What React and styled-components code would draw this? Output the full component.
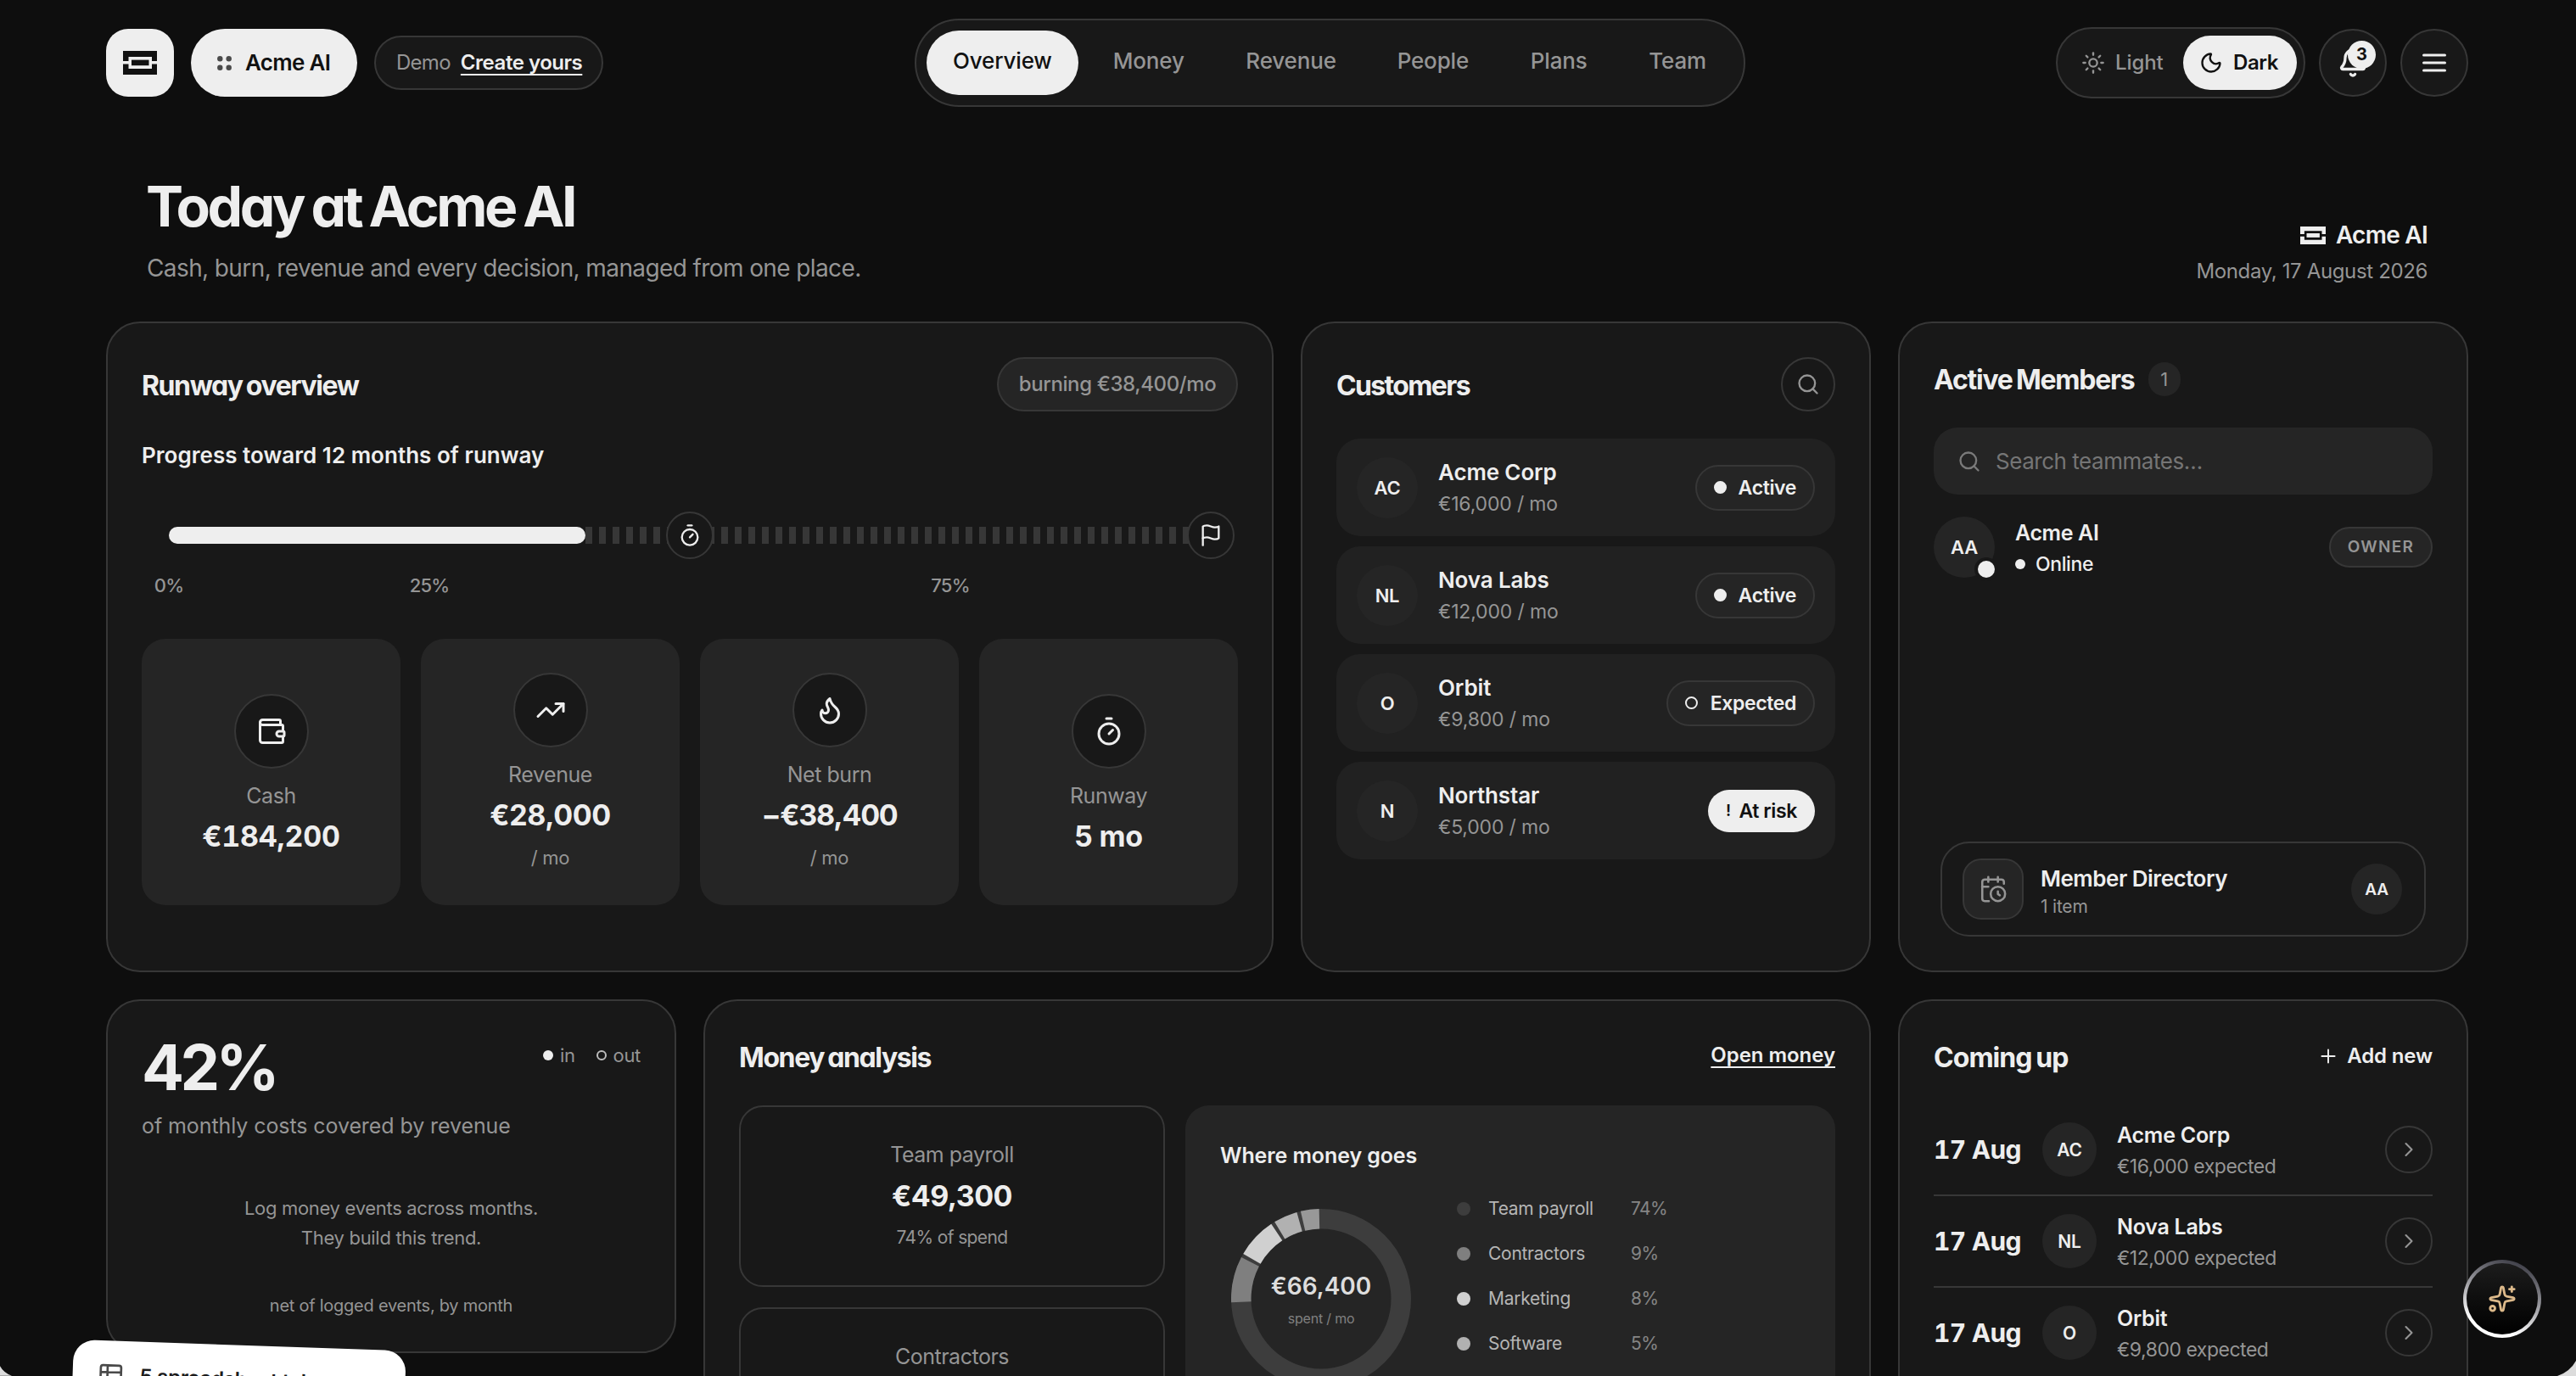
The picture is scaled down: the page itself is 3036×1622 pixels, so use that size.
import React from "react";
import styled, { createGlobalStyle, css } from "styled-components";
import {
  Sun, Moon, Bell, Search, Timer, Wallet, TrendingUp, Flame, CalendarClock,
  Plus, ChevronRight, Sparkles, Table2,
} from "lucide-react";

const c = {
  bg: "#0e0e0e", card: "#181818", tile: "#252525", row: "#212121", line: "#373737",
  text: "#eeeeee", muted: "#959595", ink: "#111111",
};

const Global = createGlobalStyle`
  * { box-sizing: border-box; }
  body { margin: 0; background: ${c.bg}; color: ${c.text}; font-family: Inter, "Liberation Sans", sans-serif; }
  h1, h2, h3, p { margin: 0; }
  svg { display: block; flex: none; }
`;

const Page = styled.div`
  position: relative; width: 3036px; height: 1622px; overflow: hidden;
  background: ${c.bg}; padding: 22px 127px 0 125px;
`;

/* Shared text */
const Txt = styled.span`
  display: block; white-space: nowrap;
  font-size: ${(p) => p.$s || 24}px;
  line-height: ${(p) => p.$lh || 32}px;
  font-weight: ${(p) => p.$w || 400};
  letter-spacing: ${(p) => p.$ls ?? -0.015}em;
  color: ${(p) => p.$c || c.text};
  ${(p) => p.$tnum && css`font-feature-settings: "tnum";`}
`;
const Heading = styled.h2`
  font-size: 32px; line-height: 40px; font-weight: 700; letter-spacing: ${(p) => p.$ls ?? -0.044}em;
  font-feature-settings: "cv11"; white-space: nowrap; padding-top: 3px; word-spacing: -0.06em;
`;

/* Header */
const Header = styled.header`display: flex; align-items: center; justify-content: space-between; height: 104px;`;
const Group = styled.div`display: flex; align-items: center; gap: ${(p) => p.$gap}px;`;
const LogoTile = styled.div`
  width: 80px; height: 80px; border-radius: 26px; background: ${c.text}; color: ${c.ink};
  display: grid; place-items: center;
`;
const Company = styled.button`
  width: 196px; height: 80px; border: 0; border-radius: 40px; background: ${c.text}; color: ${c.ink};
  display: flex; align-items: center; gap: 16px; padding: 0 0 0 31px; font-family: inherit;
`;
const DemoPill = styled.div`
  width: 270px; height: 64px; border: 2px solid ${c.line}; border-radius: 32px; background: ${c.card};
  display: flex; align-items: center; gap: 12px; padding-left: 24px;
`;
const Underlined = styled(Txt)`
  text-decoration: underline; text-decoration-thickness: 2px; text-underline-offset: 5px; text-decoration-skip-ink: none;
`;
const Nav = styled.nav`
  display: flex; gap: 8px; width: 979px; height: 104px; padding: 12px; border: 2px solid ${c.line};
  border-radius: 52px; background: ${c.card};
`;
const NavItem = styled.a`
  height: 76px; width: ${(p) => p.$width}px; border-radius: 38px; text-align: center; white-space: nowrap;
  font-size: 26px; line-height: 71px; font-weight: 500; letter-spacing: -0.006em;
  color: ${(p) => (p.$active ? c.ink : c.muted)};
  background: ${(p) => (p.$active ? c.text : "transparent")};
`;
const Toggle = styled.div`
  display: flex; width: 294px; height: 84px; padding: 8px; border: 2px solid ${c.line}; border-radius: 42px; background: ${c.card};
`;
const ToggleItem = styled.div`
  height: 64px; border-radius: 32px; display: flex; align-items: center; gap: 12px;
  width: ${(p) => (p.$on ? 134 : 140)}px; padding-left: ${(p) => (p.$on ? 19 : 20)}px;
  color: ${(p) => (p.$on ? c.ink : c.muted)}; background: ${(p) => (p.$on ? c.text : "transparent")};
`;
const RoundButton = styled.button`
  position: relative; width: ${(p) => p.$d}px; height: ${(p) => p.$d}px; padding: 0; border-radius: 50%;
  border: 2px solid ${c.line}; background: ${(p) => p.$bg || c.card}; color: ${(p) => p.$c || c.text};
  display: grid; place-items: center; flex: none;
`;
const Count = styled.span`
  position: absolute; top: 12px; right: 11px; width: 33px; height: 33px; border-radius: 50%;
  background: ${c.text}; color: ${c.ink}; font: 700 20px/33px Inter, sans-serif; text-align: center;
`;

/* Hero */
const Hero = styled.section`
  display: flex; justify-content: space-between; align-items: flex-end; height: 210px; padding: 0 48px; margin-bottom: 43px;
`;
const Title = styled.h1`
  font-size: 66px; line-height: 72px; font-weight: 700; letter-spacing: -0.052em; word-spacing: -0.045em;
  font-feature-settings: "cv11"; margin-bottom: 17px; margin-left: -1px; white-space: nowrap;
`;
const Today = styled.div`display: flex; flex-direction: column; align-items: flex-end; gap: 9px;`;

/* Grid and cards */
const Grid = styled.main`
  display: grid; grid-template-columns: repeat(4, 672px); grid-template-rows: 767px 767px; gap: 32px;
`;
const Card = styled.section`
  grid-column: span ${(p) => p.$span || 1}; height: ${(p) => p.$h || 767}px;
  border: 2px solid ${c.line}; border-radius: 40px; background: ${c.card}; padding: 40px;
  display: flex; flex-direction: column;
`;
const CardHead = styled.div`
  display: flex; align-items: center; justify-content: ${(p) => (p.$start ? "flex-start" : "space-between")};
  gap: 16px; height: ${(p) => p.$h || 64}px; margin-bottom: ${(p) => p.$mb ?? 32}px; flex: none;
`;
const BurnPill = styled.div`
  width: 284px; height: 64px; border: 2px solid ${c.line}; border-radius: 32px; background: ${c.tile};
  display: grid; place-items: center;
`;
const OpenLink = styled(Underlined)`margin-bottom: 3px;`;

/* Runway progress */
const Track = styled.div`position: relative; height: 20px; margin: 68px 32px 35px;`;
const Ticks = styled.div`
  height: 20px; margin-left: 40%;
  background: repeating-linear-gradient(90deg, #373737 0 8px, transparent 8px 16px);
`;
const Fill = styled.div`position: absolute; left: 0; top: 0; width: 40%; height: 20px; border-radius: 10px; background: ${c.text};`;
const Marker = styled.div`
  position: absolute; top: -18px; left: ${(p) => p.$at}%; width: 56px; height: 56px; margin-left: -28px;
  border: 2px solid ${c.line}; border-radius: 50%; background: ${c.card}; display: grid; place-items: center;
`;
const Scale = styled.div`display: flex; justify-content: space-between; height: 28px; margin: 0 32px 49px;`;
const ScaleMark = styled.div`display: flex; justify-content: center; width: 0;`;

const Stats = styled.div`display: grid; grid-template-columns: repeat(4, 1fr); gap: 24px;`;
const Stat = styled.div`
  height: 314px; border-radius: 28px; background: ${c.tile};
  display: flex; flex-direction: column; align-items: center; justify-content: center;
`;
const StatIcon = styled.div`
  width: 88px; height: 88px; border: 2px solid ${c.line}; border-radius: 50%; background: ${c.card};
  display: grid; place-items: center; margin-bottom: 16px;
`;
const StatValue = styled(Txt)`margin-top: 16px;`;
const StatSub = styled(Txt)`margin-top: 18px;`;

/* Lists */
const Avatar = styled.div`
  position: relative; flex: none; width: ${(p) => p.$d}px; height: ${(p) => p.$d}px; border-radius: 50%; background: ${c.tile};
  display: grid; place-items: center; font-size: ${(p) => p.$s || 21}px; font-weight: 600; letter-spacing: -0.01em;
`;
const CustomerList = styled.div`display: flex; flex-direction: column; gap: 12px;`;
const Customer = styled.div`
  height: 115px; border-radius: 28px; background: ${c.row}; padding: 0 24px; display: flex; align-items: center; gap: 24px;
`;
const Lines = styled.div`flex: 1; padding-top: ${(p) => p.$pt || 0}px; margin-left: ${(p) => p.$ml || 0}px;`;
const Status = styled.div`
  height: ${(p) => (p.$solid ? 50 : 54)}px; width: ${(p) => p.$width}px; border-radius: 27px;
  border: ${(p) => (p.$solid ? "0" : `2px solid ${c.line}`)};
  background: ${(p) => (p.$solid ? c.text : c.tile)};
  display: flex; align-items: center; justify-content: space-between; padding: 0 ${(p) => (p.$solid ? 21 : 20)}px;
`;
const Dot = styled.span`
  display: block; flex: none; width: ${(p) => p.$d}px; height: ${(p) => p.$d}px; border-radius: 50%;
  background: ${(p) => (p.$ring ? "transparent" : p.$c || c.text)};
  border: ${(p) => (p.$ring ? `2px solid ${p.$c || c.text}` : "0")};
`;

const CountBadge = styled.div`
  width: 38px; height: 40px; border-radius: 20px; background: ${c.tile}; display: grid; place-items: center;
`;
const SearchBox = styled.div`
  height: 79px; border-radius: 28px; background: ${c.tile}; color: #7a7a7a; padding-left: 28px; flex: none;
  display: flex; align-items: center; gap: 17px; margin-bottom: 26px;
`;
const Member = styled.div`display: flex; align-items: center; gap: 24px; height: 72px;`;
const Presence = styled.span`
  position: absolute; right: -4px; bottom: -4px; width: 28px; height: 28px; border-radius: 50%;
  background: ${c.text}; border: 4px solid ${c.card};
`;
const Owner = styled.div`
  width: 122px; height: 48px; border: 2px solid ${c.line}; border-radius: 24px; background: ${c.tile}; display: grid; place-items: center;
`;
const Directory = styled.div`
  margin: auto 8px 0; height: 112px; border: 2px solid ${c.line}; border-radius: 34px;
  display: flex; align-items: center; gap: 20px; padding: 0 26px 0 24px;
`;
const DirectoryIcon = styled.div`
  width: 72px; height: 72px; border: 2px solid ${c.line}; border-radius: 22px; background: ${c.tile}; color: ${c.muted};
  display: grid; place-items: center;
`;

/* Coverage */
const CoverTop = styled.div`display: flex; justify-content: space-between; margin-bottom: 13px;`;
const Legend = styled.div`display: flex; gap: 25px; padding-top: 10px;`;
const LegendItem = styled.div`display: flex; align-items: center; gap: 8px; height: 28px;`;
const Empty = styled.p`
  margin-top: 62px; text-align: center; font-size: 22px; line-height: 35px; letter-spacing: -0.014em; color: ${c.muted};
`;
const Foot = styled(Txt)`margin-top: auto; text-align: center;`;

/* Money */
const MoneyGrid = styled.div`display: grid; grid-template-columns: 502px 766px; gap: 24px;`;
const Column = styled.div`display: flex; flex-direction: column; gap: 24px;`;
const Spend = styled.div`
  height: 214px; border: 2px solid ${c.line}; border-radius: 28px; display: flex; flex-direction: column;
  align-items: center; justify-content: center; gap: 13px;
`;
const Where = styled.div`border-radius: 28px; background: ${c.tile}; padding: 43px 40px 43px 41px; height: 452px;`;
const Breakdown = styled.div`display: flex; align-items: center; margin: 20px 0 0 13px; gap: 54px;`;
const DonutBox = styled.div`display: grid; width: 212px; height: 212px; & > * { grid-area: 1 / 1; }`;
const DonutText = styled.div`
  display: flex; flex-direction: column; align-items: center; justify-content: center; gap: 8px; padding-top: 7px;
`;
const Shares = styled.div`display: flex; flex-direction: column;`;
const Share = styled.div`display: grid; grid-template-columns: 16px 147px auto; column-gap: 21px; align-items: center; height: 53px;`;

/* Coming up */
const AddNew = styled.div`display: flex; align-items: center; gap: 9px; padding-bottom: 2px;`;
const Event = styled.div`
  display: flex; align-items: center; height: 108px; border-bottom: 2px solid ${c.line};
`;
const EventDate = styled(Txt)`width: 128px;`;

/* Overlays */
const Fab = styled.button`
  position: absolute; left: 2903px; top: 1485px; width: 92px; height: 92px; border-radius: 50%; padding: 0;
  border: 4px solid transparent; color: #dcb98a; display: grid; place-items: center;
  background: linear-gradient(#1c1c1c, #000) padding-box, linear-gradient(200deg, #3f3f48 10%, #8d8d93 40%, #ffffff 80%) border-box;
`;
const Toast = styled.div`
  position: absolute; left: 87px; top: 1579px; width: 392px; height: 82px; border-radius: 25px; background: #fff; color: #4a4a4a;
  transform-origin: 0 0; transform: rotate(1.95deg); display: flex; align-items: center; gap: 18px; padding-left: 29px;
`;
const Corner = styled.svg`position: absolute; bottom: 0; ${(p) => (p.$left ? "left: 0; transform: scaleX(-1);" : "right: 0;")}`;

const Logo = ({ w }) => (
  <svg width={w} height={w * 0.7} viewBox="0 0 40 28" fill="currentColor">
    <path fillRule="evenodd" d="M0 0H40V12H34V7H6.5V12H0ZM0 15.6H6.5V21H34V15.6H40V28H0Z" />
    <rect x="10" y="10.6" width="20.5" height="6.6" />
  </svg>
);
const FlagIcon = () => (
  <svg width="28" height="28" viewBox="0 0 24 24" fill="none" stroke="currentColor" strokeWidth="2" strokeLinecap="round" strokeLinejoin="round">
    <path d="M4 15s1-1 4-1 5 2 8 2 4-1 4-1V3s-1 1-4 1-5-2-8-2-4 1-4 1z" /><path d="M4 22v-7" />
  </svg>
);
const DotsIcon = () => (
  <svg width="17" height="17" viewBox="0 0 17 17" fill="#4a4a4a">
    <circle cx="3.3" cy="3.3" r="3.2" /><circle cx="13.7" cy="3.3" r="3.2" /><circle cx="3.3" cy="13.7" r="3.2" /><circle cx="13.7" cy="13.7" r="3.2" />
  </svg>
);
const MenuIcon = () => (
  <svg width="28" height="22" viewBox="0 0 28 22" stroke="currentColor" strokeWidth="3" strokeLinecap="round">
    <path d="M1.5 2H26.5M1.5 11H26.5M1.5 20H26.5" />
  </svg>
);

const polar = (r, pct) => {
  const a = (pct / 100) * Math.PI * 2 - Math.PI / 2;
  return `${(106 + r * Math.cos(a)).toFixed(2)} ${(106 + r * Math.sin(a)).toFixed(2)}`;
};
const slice = (from, to) =>
  `M${polar(106, from)}A106 106 0 0 1 ${polar(106, to)}L${polar(82.5, to)}A82.5 82.5 0 0 0 ${polar(82.5, from)}Z`;

const shares = [
  { name: "Team payroll", pct: 74, color: "#3d3d3d" },
  { name: "Contractors", pct: 9, color: "#7f7f7f" },
  { name: "Marketing", pct: 8, color: "#d0d0d0" },
  { name: "Software", pct: 5, color: "#b1b1b1" },
  { name: "Other", pct: 4, color: "#989898" },
];

const Donut = () => {
  let at = 0;
  return (
    <svg width="212" height="212" viewBox="0 0 212 212">
      <circle cx="106" cy="106" r="94.25" fill="none" stroke="#3d3d3d" strokeWidth="23.5" />
      {shares.map(({ name, pct, color }, i) => {
        const from = at;
        at += pct;
        return i === 0 ? null : <path key={name} d={slice(from + 0.35, at - 0.35)} fill={color} />;
      })}
    </svg>
  );
};

const navItems = [["Overview", 180], ["Money", 149], ["Revenue", 171], ["People", 148], ["Plans", 133], ["Team", 131]];
const stats = [
  { Icon: Wallet, label: "Cash", value: "€184,200", tnum: true, ls: -0.006 },
  { Icon: TrendingUp, label: "Revenue", value: "€28,000", sub: "/ mo", ls: -0.012 },
  { Icon: Flame, label: "Net burn", value: "−€38,400", sub: "/ mo", ls: -0.036 },
  { Icon: Timer, label: "Runway", value: "5 mo", ls: -0.005 },
];
const customers = [
  ["AC", "Acme Corp", "€16,000 / mo", "Active"],
  ["NL", "Nova Labs", "€12,000 / mo", "Active"],
  ["O", "Orbit", "€9,800 / mo", "Expected"],
  ["N", "Northstar", "€5,000 / mo", "At risk"],
];
const statusWidth = { Active: 141, Expected: 175, "At risk": 126 };
const events = [
  ["AC", "Acme Corp", "€16,000 expected"],
  ["NL", "Nova Labs", "€12,000 expected"],
  ["O", "Orbit", "€9,800 expected"],
];
const spends = [["Team payroll", "€49,300", "74% of spend"], ["Contractors", "€6,000", "9% of spend"]];

export default function App() {
  return (
    <Page>
      <Global />
      <Header>
        <Group $gap={20}>
          <LogoTile><Logo w={40} /></LogoTile>
          <Company><DotsIcon /><Txt $s={26} $w={600} $ls={-0.026} $c={c.ink}>Acme AI</Txt></Company>
          <DemoPill>
            <Txt $ls={-0.03} $c={c.muted}>Demo</Txt>
            <Underlined $w={600} $ls={-0.0195}>Create yours</Underlined>
          </DemoPill>
        </Group>
        <Nav>
          {navItems.map(([n, w], i) => <NavItem key={n} $width={w} $active={i === 0}>{n}</NavItem>)}
        </Nav>
        <Group $gap={16}>
          <Toggle>
            <ToggleItem><Sun size={28} strokeWidth={2} /><Txt $w={500} $ls={-0.005} $c={c.muted}>Light</Txt></ToggleItem>
            <ToggleItem $on><Moon size={28} strokeWidth={2} /><Txt $w={600} $ls={-0.018} $c={c.ink}>Dark</Txt></ToggleItem>
          </Toggle>
          <RoundButton $d={80}><Bell size={36} strokeWidth={2.2} /><Count>3</Count></RoundButton>
          <RoundButton $d={80}><MenuIcon /></RoundButton>
        </Group>
      </Header>

      <Hero>
        <div>
          <Title>Today at Acme AI</Title>
          <Txt $s={28} $lh={40} $ls={-0.0216} $c={c.muted}>Cash, burn, revenue and every decision, managed from one place.</Txt>
        </div>
        <Today>
          <Group $gap={12}><Logo w={30} /><Txt $s={28} $lh={36} $w={600} $ls={-0.026}>Acme AI</Txt></Group>
          <Txt $ls={-0.015} $c={c.muted}>Monday, 17 August 2026</Txt>
        </Today>
      </Hero>

      <Grid>
        <Card $span={2}>
          <CardHead $mb={36}>
            <Heading>Runway overview</Heading>
            <BurnPill><Txt $w={500} $ls={-0.016} $c={c.muted}>burning €38,400/mo</Txt></BurnPill>
          </CardHead>
          <Txt $s={26} $w={600} $ls={0.001}>Progress toward 12 months of runway</Txt>
          <Track>
            <Ticks />
            <Fill />
            <Marker $at={50}><Timer size={28} /></Marker>
            <Marker $at={100}><FlagIcon /></Marker>
          </Track>
          <Scale>
            {["0%", "25%", "", "75%", ""].map((m, i) => (
              <ScaleMark key={i}><Txt $s={22} $lh={28} $ls={-0.035} $w={500} $c={c.muted}>{m}</Txt></ScaleMark>
            ))}
          </Scale>
          <Stats>
            {stats.map(({ Icon, label, value, sub, tnum, ls }) => (
              <Stat key={label}>
                <StatIcon><Icon size={36} /></StatIcon>
                <Txt $s={25} $ls={-0.018} $c={c.muted}>{label}</Txt>
                <StatValue $s={34} $w={700} $ls={ls} $tnum={tnum}>{value}</StatValue>
                {sub && <StatSub $s={22} $ls={-0.01} $c={c.muted}>{sub}</StatSub>}
              </Stat>
            ))}
          </Stats>
        </Card>

        <Card>
          <CardHead>
            <Heading $ls={-0.0515}>Customers</Heading>
            <RoundButton $d={64} $c={c.muted}><Search size={28} /></RoundButton>
          </CardHead>
          <CustomerList>
            {customers.map(([ini, name, mrr, status]) => {
              const solid = status === "At risk";
              return (
                <Customer key={name}>
                  <Avatar $d={72} $s={22}>{ini}</Avatar>
                  <Lines $pt={2}>
                    <Txt $s={26} $lh={38} $w={600} $ls={-0.005}>{name}</Txt>
                    <Txt $s={23} $lh={37} $ls={-0.007} $c={c.muted}>{mrr}</Txt>
                  </Lines>
                  <Status $solid={solid} $width={statusWidth[status]}>
                    {solid ? <Txt $s={19} $w={600} $c={c.ink}>!</Txt> : <Dot $d={15} $ring={status === "Expected"} />}
                    <Txt $s={23} $w={600} $ls={-0.016} $c={solid ? c.ink : c.text}>{status}</Txt>
                  </Status>
                </Customer>
              );
            })}
          </CustomerList>
        </Card>

        <Card>
          <CardHead $start $h={51}>
            <Heading $ls={-0.039}>Active Members</Heading>
            <CountBadge><Txt $s={22} $c={c.muted}>1</Txt></CountBadge>
          </CardHead>
          <SearchBox><Search size={28} /><Txt $s={26} $ls={-0.018} $c="#757575">Search teammates…</Txt></SearchBox>
          <Member>
            <Avatar $d={72} $s={22}>AA<Presence /></Avatar>
            <Lines $pt={3}>
              <Txt $s={25} $lh={37} $w={600} $ls={-0.015}>Acme AI</Txt>
              <Group $gap={12}><Dot $d={12} /><Txt $s={23} $lh={37} $w={500} $ls={-0.017}>Online</Txt></Group>
            </Lines>
            <Owner><Txt $s={19} $w={600} $ls={0.07} $c={c.muted}>OWNER</Txt></Owner>
          </Member>
          <Directory>
            <DirectoryIcon><CalendarClock size={34} strokeWidth={1.8} /></DirectoryIcon>
            <Lines $pt={6}>
              <Txt $s={26} $lh={34} $w={600} $ls={-0.019}>Member Directory</Txt>
              <Txt $s={21} $lh={31} $ls={-0.01} $c={c.muted}>1 item</Txt>
            </Lines>
            <Avatar $d={60} $s={19}>AA</Avatar>
          </Directory>
        </Card>

        <Card $h={417}>
          <CoverTop>
            <Txt $s={74} $lh={76} $w={700} $ls={-0.062}>42%</Txt>
            <Legend>
              <LegendItem><Dot $d={12} /><Txt $s={22} $c={c.muted}>in</Txt></LegendItem>
              <LegendItem><Dot $d={12} $ring $c="#bdbdbd" /><Txt $s={22} $c={c.muted}>out</Txt></LegendItem>
            </Legend>
          </CoverTop>
          <Txt $s={25} $lh={36} $ls={-0.0035} $c={c.muted}>of monthly costs covered by revenue</Txt>
          <Empty>Log money events across months.<br />They build this trend.</Empty>
          <Foot $s={20} $lh={28} $ls={-0.0125} $c={c.muted}>net of logged events, by month</Foot>
        </Card>

        <Card $span={2}>
          <CardHead $h={51}>
            <Heading>Money analysis</Heading>
            <OpenLink $w={600} $ls={-0.002}>Open money</OpenLink>
          </CardHead>
          <MoneyGrid>
            <Column>
              {spends.map(([label, value, sub]) => (
                <Spend key={label}>
                  <Txt $s={25} $ls={-0.0195} $c={c.muted}>{label}</Txt>
                  <Txt $s={34} $lh={40} $w={700} $ls={-0.016}>{value}</Txt>
                  <Txt $s={21} $ls={-0.03} $c={c.muted}>{sub}</Txt>
                </Spend>
              ))}
            </Column>
            <Where>
              <Txt $s={25} $w={600} $ls={-0.004}>Where money goes</Txt>
              <Breakdown>
                <DonutBox>
                  <Donut />
                  <DonutText>
                    <Txt $s={28} $w={600} $ls={0} $c="#dddddd">€66,400</Txt>
                    <Txt $s={16} $lh={28} $ls={-0.012} $c="#808080">spent / mo</Txt>
                  </DonutText>
                </DonutBox>
                <Shares>
                  {shares.map((s) => (
                    <Share key={s.name}>
                      <Dot $d={16} $c={s.color} />
                      <Txt $s={21} $ls={-0.013} $c="#b5b5b5">{s.name}</Txt>
                      <Txt $s={21} $ls={-0.03} $c="#858585">{s.pct}%</Txt>
                    </Share>
                  ))}
                </Shares>
              </Breakdown>
            </Where>
          </MoneyGrid>
        </Card>

        <Card>
          <CardHead $h={51} $mb={31}>
            <Heading $ls={-0.03}>Coming up</Heading>
            <AddNew><Plus size={26} strokeWidth={1.8} /><Txt $w={600} $ls={-0.006}>Add new</Txt></AddNew>
          </CardHead>
          {events.map(([ini, name, sub]) => (
            <Event key={name}>
              <EventDate $s={30} $lh={36} $w={700} $ls={-0.022} $tnum>17 Aug</EventDate>
              <Avatar $d={64}>{ini}</Avatar>
              <Lines $ml={24} $pt={4}>
                <Txt $s={25} $lh={37} $w={600} $ls={-0.01}>{name}</Txt>
                <Txt $s={23} $lh={37} $ls={-0.021} $c={c.muted}>{sub}</Txt>
              </Lines>
              <RoundButton $d={56} $c={c.muted}><ChevronRight size={28} strokeWidth={1.8} /></RoundButton>
            </Event>
          ))}
        </Card>
      </Grid>

      <Fab><Sparkles size={34} /></Fab>
      <Toast><Table2 size={32} /><Txt $w={600} $ls={-0.012} $c="#1c1c1c">5 spreadsheet tabs</Txt></Toast>
      <Corner width="22" height="18" viewBox="0 0 22 18"><path d="M22 0Q15 13 0 18H22Z" fill="#dcdcdc" /></Corner>
      <Corner $left width="14" height="12" viewBox="0 0 22 18"><path d="M22 0Q15 13 0 18H22Z" fill="#dcdcdc" /></Corner>
    </Page>
  );
}
